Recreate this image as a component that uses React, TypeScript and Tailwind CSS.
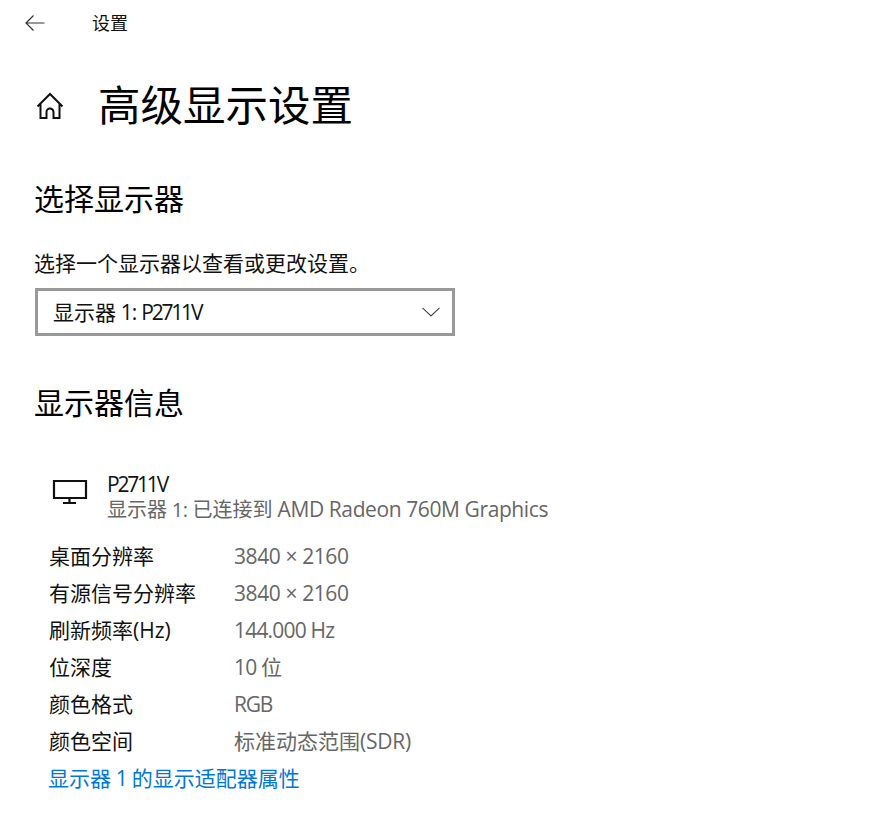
const rows: [string, React.ReactNode][] = [
  ["桌面分辨率", <span className="tracking-[-0.4px]">3840 × 2160</span>],
  ["有源信号分辨率", <span className="tracking-[-0.4px]">3840 × 2160</span>],
  ["刷新频率(Hz)", <span className="tracking-[-0.8px]">144.000 Hz</span>],
  ["位深度", <span><span className="tracking-[-0.8px]">10 </span>位</span>],
  ["颜色格式", <span className="tracking-[-1.2px]">RGB</span>],
  ["颜色空间", <span>标准动态范围<span className="tracking-[-0.2px]">(SDR)</span></span>],
];

export default function App() {
  return (
    <div className="w-[891px] h-[819px] bg-white text-black overflow-hidden flex flex-col font-['Open_Sans','Noto_Sans_CJK_SC',sans-serif]">
      <div className="flex items-center h-[45px] pl-[24px]">
        <svg width="22" height="18" viewBox="0 0 22 18" fill="none" stroke="#333" strokeWidth="1.2">
          <path d="M20.500 9H2M9.500 1.500L2 9l7.500 7.500" />
        </svg>
        <span className="ml-[46px] text-[18px] leading-[24px] text-[#111]">设置</span>
      </div>
      <div className="flex items-center h-[76px] mt-[22px] pl-[36px]">
        <svg width="28" height="28" viewBox="0 0 28 28" fill="none" stroke="#111" strokeWidth="2">
          <path d="M1.500 15.500L14 3l12.500 12.500M4.500 12.500V27h6v-6a3.500 3.500 0 0 1 7 0v6h6V12.500" />
        </svg>
        <h1 className="ml-[34px] text-[42.5px] leading-[56px] font-normal">高级显示设置</h1>
      </div>
      <h2 className="ml-[34px] mt-[36px] text-[30px] leading-[40px] font-normal">选择显示器</h2>
      <p className="ml-[34px] mt-[30px] text-[21px] leading-[28px] text-[#111]">选择一个显示器以查看或更改设置。</p>
      <div className="ml-[35px] mt-[11px] w-[420px] h-[48px] border-[3px] border-[#999999] flex items-center justify-between pl-[15px] pr-[12px]">
        <span className="text-[21px] leading-[26px] text-[#111]">
          显示器<span className="tracking-[-0.8px]"> 1: </span><span className="tracking-[-2.2px]">P2711V</span>
        </span>
        <svg width="18" height="10" viewBox="0 0 18 10" fill="none" stroke="#444" strokeWidth="1.1">
          <path d="M.5.8L9 9 17.500.8" />
        </svg>
      </div>
      <h2 className="ml-[34px] mt-[47px] text-[30px] leading-[40px] font-normal">显示器信息</h2>
      <div className="ml-[52px] mt-[48px] flex items-start">
        <svg width="36" height="30" viewBox="0 0 36 30" fill="none" stroke="#111" strokeWidth="2.2" className="mt-[5px]">
          <path d="M2 5h32v17H2zM17.500 22v5M11 27h13" />
        </svg>
        <div className="ml-[19px] flex flex-col">
          <span className="text-[21px] leading-[26px] text-[#111] tracking-[-2.2px]">P2711V</span>
          <span className="text-[20px] leading-[25px] text-[#666]">
            显示器<span className="tracking-[-0.4px]"> 1: </span>已连接到<span className="text-[21px] tracking-[-0.4px]"> AMD Radeon 760M Graphics</span>
          </span>
        </div>
      </div>
      <div className="ml-[49px] mt-[16px] flex flex-col">
        {rows.map(([k, v]) => (
          <div key={k} className="flex h-[37px] items-center">
            <span className="w-[185px] text-[21px] text-[#111]">{k}</span>
            <span className="text-[21px] text-[#666]">{v}</span>
          </div>
        ))}
        <span className="-ml-[1px] text-[21px] leading-[37px] text-[#0078d7]">
          显示器<span className="tracking-[-0.7px]"> 1 </span>的显示适配器属性
        </span>
      </div>
    </div>
  );
}
